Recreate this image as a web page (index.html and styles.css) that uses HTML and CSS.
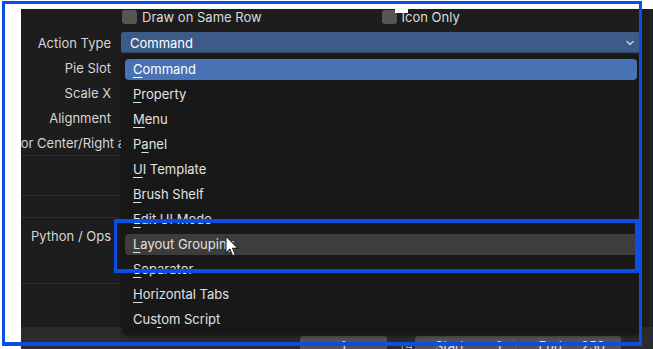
FILE: index.html
```html
<!DOCTYPE html>
<html>
<head>
  <meta charset="UTF-8">
  <title>Pie Menu Item</title>
  <link rel="stylesheet" href="styles.css">
</head>
<body>
  <div class="app">
    <div class="main">
      <div class="labels">
        <div class="label-row first"></div>
        <div class="label-row">Action Type</div>
        <div class="label-row">Pie Slot</div>
        <div class="label-row">Scale X</div>
        <div class="label-row">Alignment</div>
        <div class="label-row clip"><span>Spacing for Center/Right align</span></div>
        <div class="label-block b1"></div>
        <div class="label-block b2"></div>
        <div class="label-block b3">Python / Ops</div>
        <div class="label-block b4"></div>
      </div>

      <div class="content">
        <div class="check-row">
          <label class="check"><span class="box"></span>Draw on Same Row</label>
          <label class="check"><span class="box"></span>Icon Only</label>
        </div>
        <div class="select">
          <span>Command</span>
          <svg class="chevron" width="8" height="6" viewBox="0 0 8 6">
            <path d="M1 1.5 L4 4.5 L7 1.5" fill="none" stroke="#c9d3e3" stroke-width="1.4" stroke-linecap="round" stroke-linejoin="round"/>
          </svg>
        </div>
      </div>

      <div class="gutter"></div>
    </div>

    <div class="timeline">
      <div class="field frame-field">1</div>
      <div class="clock">&#9719;</div>
      <div class="field range">
        <span class="seg"><span>Start</span><span>1</span></span>
        <span class="seg"><span>End</span><span>250</span></span>
      </div>
    </div>

    <div class="menu">
      <div class="item active"><u>C</u>ommand</div>
      <div class="item"><u>P</u>roperty</div>
      <div class="item"><u>M</u>enu</div>
      <div class="item">P<u>a</u>nel</div>
      <div class="item"><u>U</u>I Template</div>
      <div class="item"><u>B</u>rush Shelf</div>
      <div class="item"><u>E</u>dit UI Mode</div>
      <div class="item hover"><u>L</u>ayout Grouping</div>
      <div class="item"><u>S</u>eparator</div>
      <div class="item"><u>H</u>orizontal Tabs</div>
      <div class="item">Cus<u>t</u>om Script</div>
    </div>
  </div>

  <div class="frame outer"></div>
  <div class="frame inner"></div>
  <div class="notch"></div>

  <svg class="cursor" width="16" height="23" viewBox="0 0 14 21">
    <path d="M1.5 1 L1.5 16.5 L5 13 L7.6 19 L10 18 L7.5 12.2 L12.5 12.2 Z" fill="#ffffff" stroke="#222" stroke-width="1" stroke-linejoin="round"/>
  </svg>
</body>
</html>
```

FILE: styles.css
```css
body {
  margin: 0;
  background: #ffffff;
  font-family: Inter, "Noto Sans", sans-serif;
  font-size: 13px;
}
.app {
  position: relative;
  margin: 9px 0 0 21px;
  width: 632px;
  height: 340px;
  background: #1d1d1d;
  color: #d6d6d6;
  overflow: hidden;
}
.main {
  display: flex;
  height: 318px;
}
.labels {
  width: 100px;
  display: flex;
  flex-direction: column;
}
.label-row {
  height: 25px;
  display: flex;
  align-items: center;
  justify-content: flex-end;
  padding-right: 10px;
  white-space: nowrap;
}
.label-row.first {
  height: 21px;
}
.label-row.clip {
  overflow: hidden;
  padding-right: 0;
}
.label-row.clip span {
  margin-right: -26px;
}
.label-block {
  border-top: 1px solid #2e2e2e;
  box-sizing: border-box;
}
.b1 { height: 40px; }
.b2 { height: 22px; }
.b3 {
  height: 66px;
  text-align: right;
  padding: 10px 10px 0 0;
}
.b4 { height: 44px; }

.content {
  width: 519px;
}
.check-row {
  display: grid;
  grid-template-columns: 1fr 1fr;
  height: 21px;
}
.check {
  display: flex;
  align-items: center;
  gap: 5px;
  padding-left: 1px;
  height: 16px;
  color: #dcdcdc;
}
.box {
  width: 15px;
  height: 14px;
  background: #555555;
  border-radius: 3px;
}
.select {
  margin-top: 2px;
  height: 21px;
  display: flex;
  align-items: center;
  justify-content: space-between;
  padding: 0 6px 0 9px;
  background: #3d5b88;
  border-radius: 3px;
  color: #ffffff;
  box-shadow: inset 0 -1px 0 #33496b;
}
.chevron {
  display: block;
}
.gutter {
  flex: 1;
  border-right: 1px solid #2a2a2a;
  margin-right: 2px;
}

.timeline {
  height: 22px;
  background: #2b2b2b;
  display: flex;
  justify-content: flex-end;
  align-items: flex-start;
  padding: 9px 32px 0 0;
  box-sizing: border-box;
  color: #e4e4e4;
}
.field {
  height: 20px;
  background: #545454;
  border-radius: 3px;
  display: flex;
  align-items: center;
}
.frame-field {
  width: 87px;
  justify-content: center;
}
.clock {
  width: 17px;
  margin: 0 0 0 11px;
  text-align: center;
  color: #cfcfcf;
  line-height: 20px;
}
.range {
  width: 206px;
}
.seg {
  flex: 1;
  display: flex;
  justify-content: space-between;
  padding: 0 16px 0 20px;
  border-left: 1px solid #3f3f3f;
}
.seg:first-child {
  border-left: none;
}

.menu {
  position: absolute;
  left: 101px;
  top: 46px;
  width: 518px;
  height: 280px;
  box-sizing: border-box;
  padding: 4px 3px 5px 3px;
  background: #181818;
  border-radius: 6px;
  box-shadow: 0 1px 4px rgba(0, 0, 0, 0.5);
  display: flex;
  flex-direction: column;
  gap: 4px;
}
.item {
  height: 21px;
  line-height: 21px;
  padding-left: 8px;
  border-radius: 4px;
  color: #e2e2e2;
}
.item u {
  text-underline-offset: 3px;
  text-decoration-thickness: 1px;
}
.item.active {
  background: #4772b3;
  color: #ffffff;
}
.item.hover {
  background: #3d3d3d;
}

.frame {
  position: absolute;
  border: 3px solid #0a4fe4;
}
.outer {
  left: 2px;
  top: 1px;
  width: 634px;
  height: 338px;
  border-bottom-width: 4px;
}
.inner {
  left: 114px;
  top: 219px;
  width: 518px;
  height: 46px;
  border-width: 4px 4px 4px 3px;
}
.notch {
  position: absolute;
  left: 395px;
  top: 4px;
  width: 13px;
  height: 9px;
  background: #ffffff;
}
.cursor {
  position: absolute;
  left: 224px;
  top: 235px;
}
```
